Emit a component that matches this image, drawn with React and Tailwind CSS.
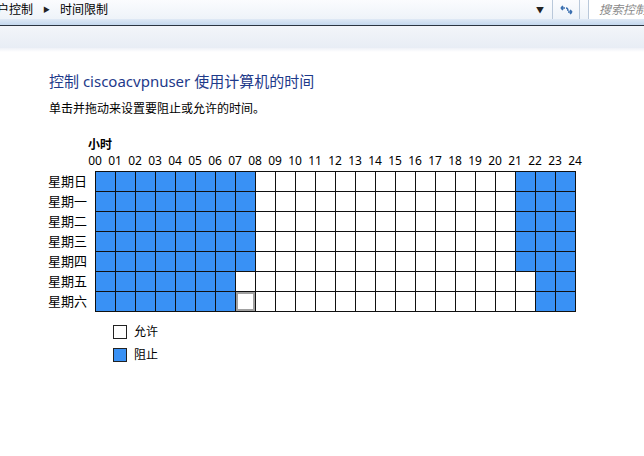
import React from "react";

const DAYS = ["星期日", "星期一", "星期二", "星期三", "星期四", "星期五", "星期六"];
const HOURS = Array.from({ length: 25 }, (_, i) => String(i).padStart(2, "0"));

// blocked hours per day
const isBlocked = (day, h) => {
  if (day <= 4) return h <= 7 || h >= 21;
  return h <= 6 || h >= 22;
};

const App = () => {
  return (
    <div
      className="w-[644px] h-[456px] bg-white overflow-hidden text-black"
      style={{ fontFamily: '"Noto Sans", "Noto Sans CJK SC", sans-serif' }}
    >
      {/* address bar */}
      <div className="h-[19px] flex items-center bg-gradient-to-b from-[#fbfcfe] to-[#eef3f9]">
        <div className="flex-1 h-full flex items-center text-[12px] leading-none -ml-[3px] gap-[10px] border-r border-[#b9c8da]">
          <span>户控制</span>
          <span className="text-[7px] text-[#222]">▶</span>
          <span>时间限制</span>
          <span className="ml-auto mr-[8px] text-[8px] text-[#222]">▼</span>
        </div>
        <div className="w-[27px] h-full flex items-center justify-center border-r border-[#b9c8da]">
          <svg width="15" height="12" viewBox="0 0 15 12">
            <path d="M2 4 L6 4 M2 4 L4 2 M2 4 L4 6" stroke="#3a6fb0" strokeWidth="1.6" fill="none" />
            <path d="M13 8 L9 8 M13 8 L11 6 M13 8 L11 10" stroke="#3a6fb0" strokeWidth="1.6" fill="none" />
            <path d="M7 4 Q9 4 9 7" stroke="#3a6fb0" strokeWidth="1.4" fill="none" />
          </svg>
        </div>
        <div className="w-[8px]" />
        <div className="flex-none w-[56px] h-full flex items-center pl-[10px] border-l border-[#b9c8da] bg-white text-[12px] italic text-[#8a8a8a] whitespace-nowrap overflow-hidden">
          搜索控制面板
        </div>
      </div>
      <div className="h-[6px] bg-gradient-to-b from-[#dfe9f5] to-[#c4d8ee]" />
      <div className="h-px bg-[#2b3440]" />
      <div className="h-[22px] bg-gradient-to-b from-[#f3f5f9] to-[#e8edf5]" />
      <div className="h-[4px] bg-gradient-to-b from-[#eef1f7] to-white" />

      {/* content */}
      <div className="pl-[49px] pt-[19px]">
        <div className="text-[15px] leading-[20px] text-[#1e3a8a]">控制 ciscoacvpnuser 使用计算机的时间</div>
        <div className="mt-[10px] text-[12px] leading-[16px]">单击并拖动来设置要阻止或允许的时间。</div>
      </div>

      <div className="mt-[20px] flex flex-col">
        <div className="pl-[88px] text-[12px] font-bold leading-[16px]">小时</div>
        <div className="flex pl-[85px] text-[12px] leading-[16px]">
          {HOURS.map((h) => (
            <span key={h} className="w-[20px] text-center">{h}</span>
          ))}
        </div>
        <div className="flex mt-[2px]">
          <div className="w-[95px] pr-[8px] flex flex-col pt-px">
            {DAYS.map((d) => (
              <div key={d} className="h-[20px] flex items-center justify-end text-[13px]">{d}</div>
            ))}
          </div>
          <div className="border-l border-t border-[#111]">
            {DAYS.map((d, di) => (
              <div key={d} className="flex">
                {Array.from({ length: 24 }, (_, h) => {
                  const focus = di === 6 && h === 7;
                  return (
                    <div
                      key={h}
                      className={
                        "w-[20px] h-[20px] border-r border-b border-[#111] " +
                        (isBlocked(di, h) ? "bg-[#3991f5]" : "bg-white") +
                        (focus ? " shadow-[inset_0_0_0_2px_#a0a0a0]" : "")
                      }
                    />
                  );
                })}
              </div>
            ))}
          </div>
        </div>

        {/* legend */}
        <div className="pl-[113px] mt-[12px] flex flex-col gap-[7px] text-[12px] leading-[16px]">
          <div className="flex items-center gap-[7px]">
            <div className="w-[14px] h-[14px] border border-[#222] bg-white" />
            <span>允许</span>
          </div>
          <div className="flex items-center gap-[7px]">
            <div className="w-[14px] h-[14px] border border-[#222] bg-[#3991f5]" />
            <span>阻止</span>
          </div>
        </div>
      </div>
    </div>
  );
};

export default App;
